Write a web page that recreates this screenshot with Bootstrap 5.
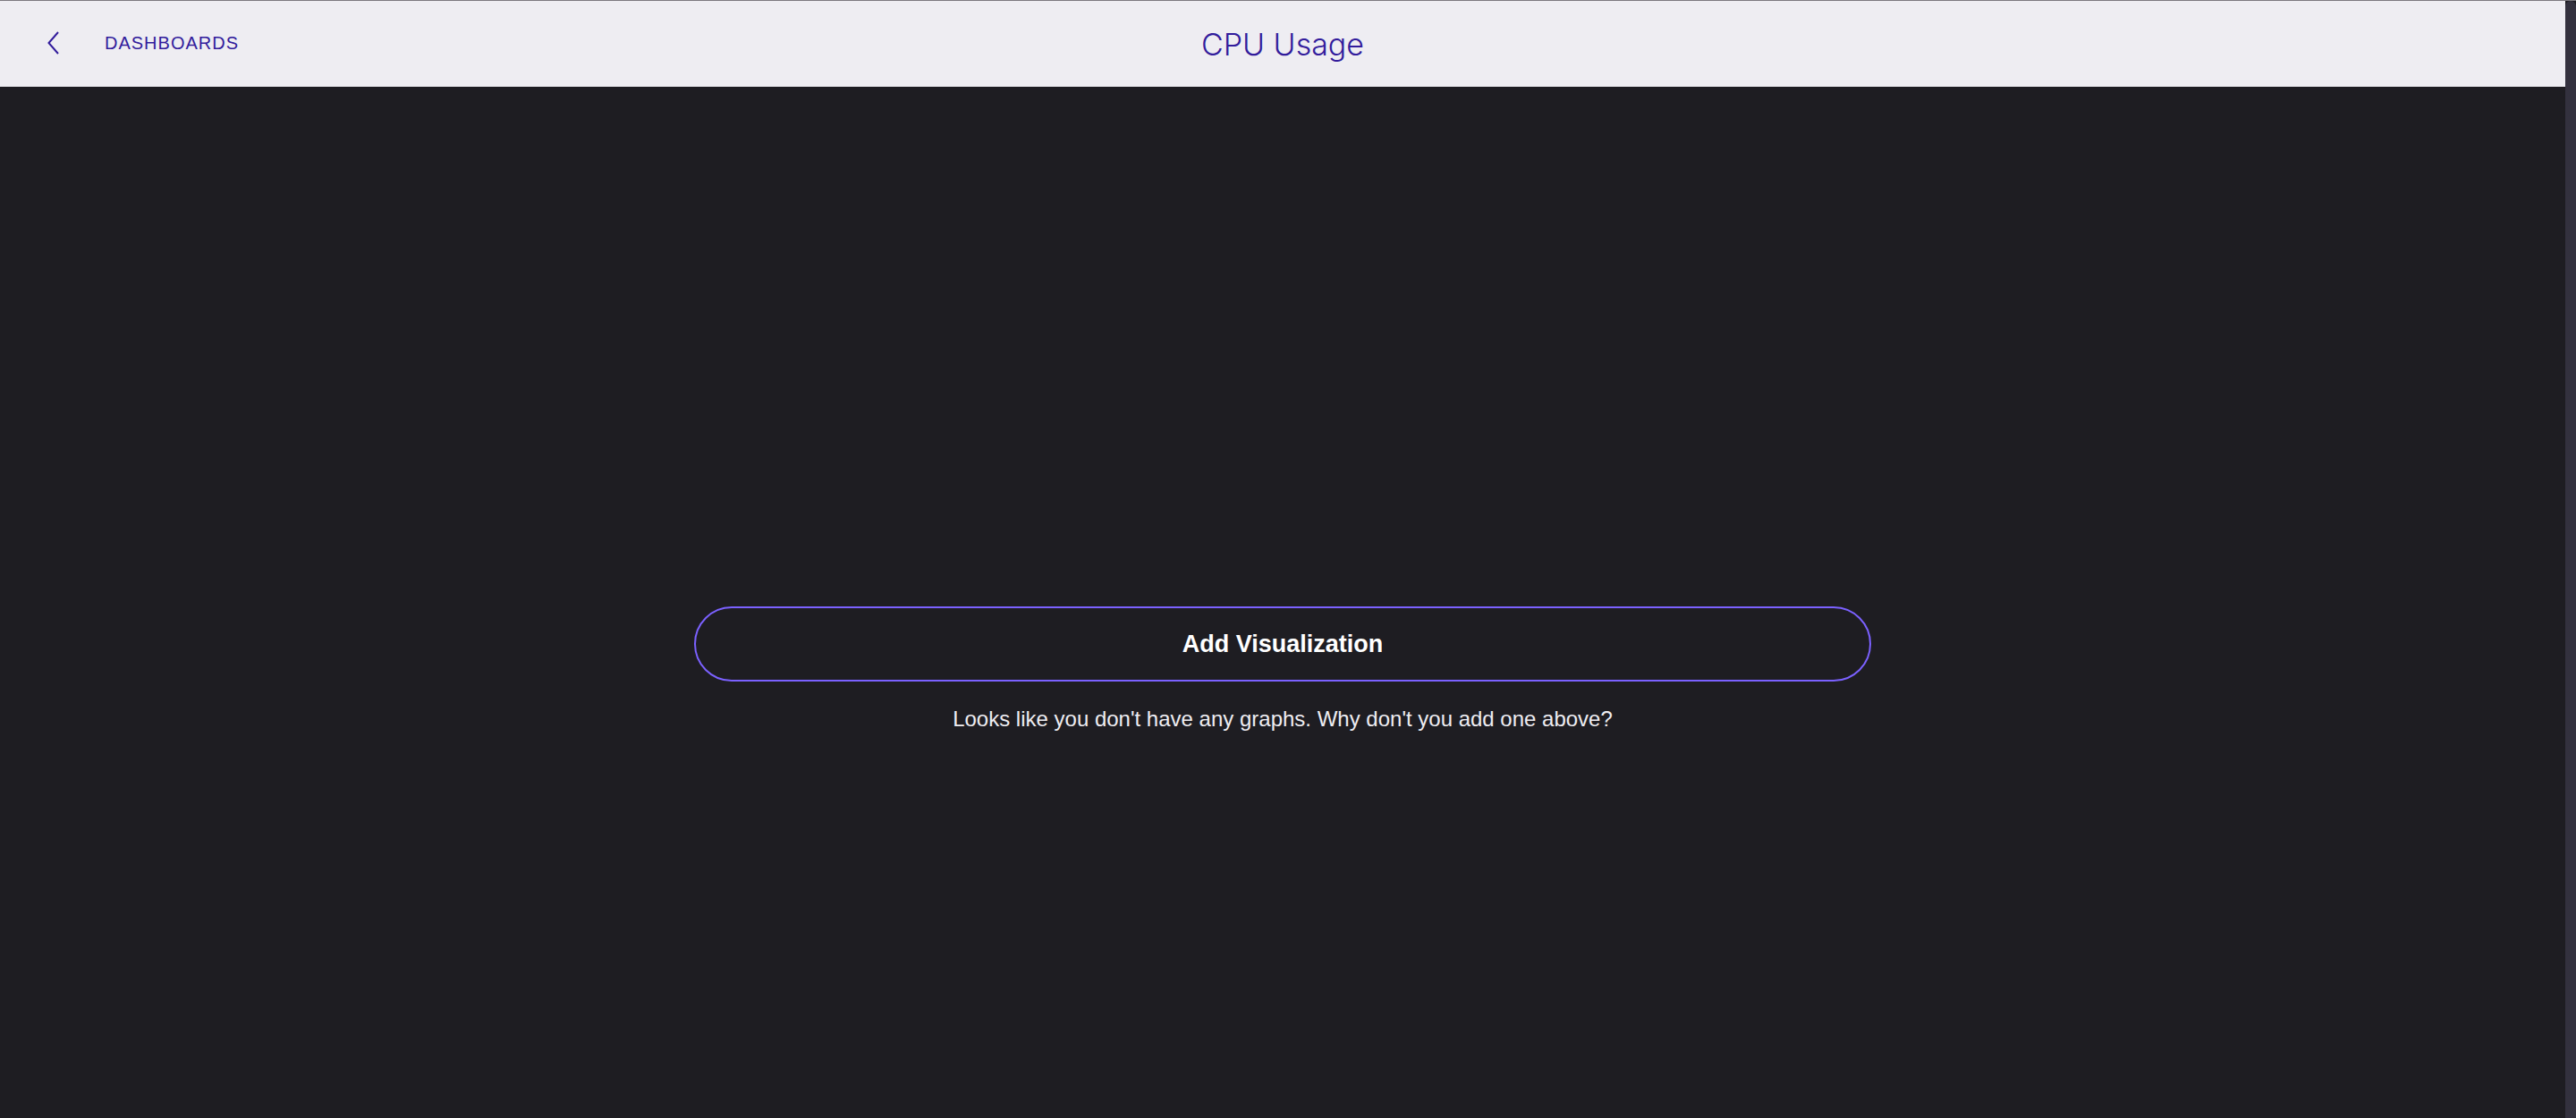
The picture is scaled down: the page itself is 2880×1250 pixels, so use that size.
<!DOCTYPE html>
<html lang="en">
<head>
<meta charset="utf-8">
<meta name="viewport" content="width=device-width, initial-scale=1">
<title>CPU Usage</title>
<link href="https://cdn.jsdelivr.net/npm/bootstrap@5.3.0/dist/css/bootstrap.min.css" rel="stylesheet">
<style>
  body { background: #1e1d22; color: #eeedf2; font-family: "Liberation Sans", Arial, sans-serif; border-top: 1px solid #7d7a80; }
  .topbar { background: #eeedf2; height: 96px; padding-top: 2px; }
  .topbar, .topbar a { color: #321c9c; }
  .side { flex: 1 1 0; }
  .back-link { gap: 51px; padding: 0 0 4px 53px; font-size: 20px; line-height: 24px; letter-spacing: 1px; }
  .page-title { font-family: Inter, "Liberation Sans", sans-serif; font-weight: 300; font-size: 34px; line-height: 40px; }
  .main-area { padding-top: 150px; }
  .empty-state { width: 100%; max-width: 1316px; }
  .add-btn { --bs-btn-color: #fff; --bs-btn-border-color: #7b61ff; --bs-btn-hover-color: #fff; --bs-btn-hover-bg: #2c2a38; --bs-btn-hover-border-color: #7b61ff; --bs-btn-border-width: 2px; height: 84px; font-size: 27px; line-height: 32px; }
  .hint { margin: 26px 0 0; font-size: 24px; line-height: 32px; }
  .scroll-track { width: 12px; background: #1e1d22; }
  .scroll-thumb { background: #33313e; border-radius: 6px 6px 0 0; }
</style>
</head>
<body class="min-vh-100 d-flex">
<div class="flex-grow-1 d-flex flex-column">
  <header class="topbar d-flex align-items-center">
    <nav class="side d-flex" aria-label="Breadcrumb">
      <a href="#" class="back-link d-inline-flex align-items-center text-decoration-none">
        <svg width="13" height="26" viewBox="0 0 13 26" fill="none" stroke="currentColor" stroke-width="2" aria-hidden="true"><path d="M12 1 1.500 13 12 25"/></svg>
        <span>DASHBOARDS</span>
      </a>
    </nav>
    <h1 class="page-title m-0">CPU Usage</h1>
    <div class="side"></div>
  </header>
  <main class="main-area flex-grow-1 d-flex flex-column align-items-center justify-content-center">
    <section class="empty-state text-center">
      <button type="button" class="btn add-btn w-100 rounded-pill fw-bold">Add Visualization</button>
      <p class="hint">Looks like you don't have any graphs. Why don't you add one above?</p>
    </section>
  </main>
</div>
<div class="scroll-track d-flex" aria-hidden="true"><div class="scroll-thumb w-100"></div></div>
<script src="https://cdn.jsdelivr.net/npm/bootstrap@5.3.0/dist/js/bootstrap.bundle.min.js"></script>
</body>
</html>
